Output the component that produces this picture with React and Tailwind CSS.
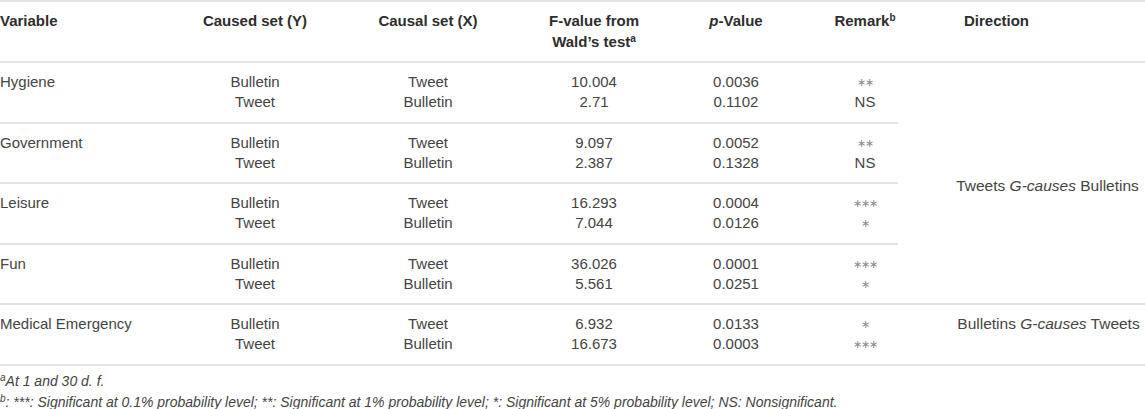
const groups = [
  { name: 'Hygiene', f: ['10.004', '2.71'], p: ['0.0036', '0.1102'], r: ['∗∗', 'NS'] },
  { name: 'Government', f: ['9.097', '2.387'], p: ['0.0052', '0.1328'], r: ['∗∗', 'NS'] },
  { name: 'Leisure', f: ['16.293', '7.044'], p: ['0.0004', '0.0126'], r: ['∗∗∗', '∗'] },
  { name: 'Fun', f: ['36.026', '5.561'], p: ['0.0001', '0.0251'], r: ['∗∗∗', '∗'] },
  { name: 'Medical Emergency', f: ['6.932', '16.673'], p: ['0.0133', '0.0003'], r: ['∗', '∗∗∗'] },
];

const cell = 'border-b-2 border-[#e4e4e4] pt-[9px] pb-[9.5px] align-top leading-[20px]';

// remark column: stars are drawn smaller and lighter than letters
const Remark = ({ v }) =>
  v === 'NS' ? <div>NS</div> : <div className="text-[11px] text-[#8a8a8a] tracking-[-1px]">{v}</div>;

const App = () => {
  return (
    <div className="w-[1145px] h-[409px] bg-white text-[#444] font-['Liberation_Sans',Arial,sans-serif] text-[15px] overflow-hidden">
      <table className="w-[1145px] table-fixed border-collapse">
        <colgroup>
          <col className="w-[170px]" />
          <col className="w-[170px]" />
          <col className="w-[176px]" />
          <col className="w-[156px]" />
          <col className="w-[128px]" />
          <col className="w-[98px]" />
          <col className="w-[247px]" />
        </colgroup>
        <thead>
          <tr className="border-t-2 border-[#e4e4e4] font-bold text-[#2e2e2e] leading-[21px]">
            <th className="border-b-2 border-[#e4e4e4] pt-[8px] pb-[9px] align-top text-left font-bold">Variable</th>
            <th className="border-b-2 border-[#e4e4e4] pt-[8px] pb-[9px] align-top text-center font-bold">Caused set (Y)</th>
            <th className="border-b-2 border-[#e4e4e4] pt-[8px] pb-[9px] align-top text-center font-bold">Causal set (X)</th>
            <th className="border-b-2 border-[#e4e4e4] pt-[8px] pb-[9px] align-top text-center font-bold">
              F-value from
              <br />
              Wald’s test<sup className="text-[10px]">a</sup>
            </th>
            <th className="border-b-2 border-[#e4e4e4] pt-[8px] pb-[9px] align-top text-center font-bold">
              <i>p</i>-Value
            </th>
            <th className="border-b-2 border-[#e4e4e4] pt-[8px] pb-[9px] pl-[32px] align-top text-center font-bold">
              Remark<sup className="text-[10px]">b</sup>
            </th>
            <th className="border-b-2 border-[#e4e4e4] pt-[8px] pb-[9px] pl-[66px] align-top text-left font-bold">Direction</th>
          </tr>
        </thead>
        <tbody>
          {groups.map((g, i) => (
            <tr key={g.name}>
              <td className={`${cell} text-left`}>{g.name}</td>
              <td className={`${cell} text-center`}>
                <div>Bulletin</div>
                <div>Tweet</div>
              </td>
              <td className={`${cell} text-center`}>
                <div>Tweet</div>
                <div>Bulletin</div>
              </td>
              <td className={`${cell} text-center`}>
                <div>{g.f[0]}</div>
                <div>{g.f[1]}</div>
              </td>
              <td className={`${cell} text-center`}>
                <div>{g.p[0]}</div>
                <div>{g.p[1]}</div>
              </td>
              <td className={`${cell} text-center pl-[32px]`}>
                <Remark v={g.r[0]} />
                <Remark v={g.r[1]} />
              </td>
              {i === 0 && (
                <td rowSpan={4} className="border-b-2 border-[#e4e4e4] pl-[52px] pt-[6px] align-middle text-center leading-[20px] text-[15.5px]">
                  Tweets <i>G-causes</i> Bulletins
                </td>
              )}
              {i === 4 && (
                <td className={`${cell} pl-[54px] text-center text-[15.5px]`}>
                  Bulletins <i>G-causes</i> Tweets
                </td>
              )}
            </tr>
          ))}
        </tbody>
      </table>
      <div className="mt-[5px] text-[14px] italic leading-[21px] text-[#444]">
        <p>
          <sup className="text-[10px]">a</sup>At 1 and 30 d. f.
        </p>
        <p>
          <sup className="text-[10px]">b</sup>: ***: Significant at 0.1% probability level; **: Significant at 1% probability level; *: Significant at 5% probability level; NS: Nonsignificant.
        </p>
      </div>
    </div>
  );
};

export default App;
